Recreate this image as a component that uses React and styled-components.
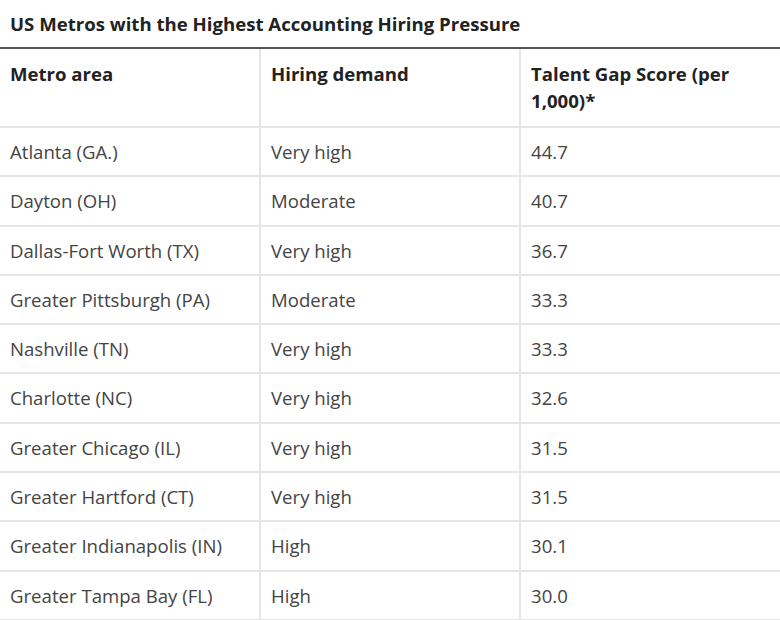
import React from "react";
import styled, { createGlobalStyle } from "styled-components";

const GlobalStyle = createGlobalStyle`
  html, body {
    margin: 0;
    padding: 0;
    background: #ffffff;
  }
  body {
    font-family: "Open Sans", Lato, "Liberation Sans", sans-serif;
    color: #444444;
  }
`;

const Wrapper = styled.div`
  width: 780px;
  overflow: hidden;
`;

const Title = styled.h3`
  margin: 0;
  padding: 11px 10px 10px;
  font-size: 18.6px;
  line-height: 26px;
  font-weight: 700;
  color: #222222;
  border-bottom: 2px solid #555555;
`;

const Table = styled.table`
  width: 780px;
  border-collapse: collapse;
  table-layout: fixed;
`;

const Head = styled.th`
  text-align: left;
  vertical-align: top;
  padding: 11px 10px 12px;
  font-size: 18.6px;
  line-height: 27px;
  font-weight: 700;
  color: #222222;
  border-bottom: 2px solid #e6e6e6;
  border-left: 2px solid #e6e6e6;
  &:first-child {
    border-left: none;
  }
`;

const Cell = styled.td`
  padding: 10px 10px 10.3px;
  font-size: 18.6px;
  line-height: 27px;
  color: #444444;
  border-bottom: 2px solid #e6e6e6;
  border-left: 2px solid #e6e6e6;
  &:first-child {
    border-left: none;
  }
`;

const rows = [
  ["Atlanta (GA.)", "Very high", "44.7"],
  ["Dayton (OH)", "Moderate", "40.7"],
  ["Dallas-Fort Worth (TX)", "Very high", "36.7"],
  ["Greater Pittsburgh (PA)", "Moderate", "33.3"],
  ["Nashville (TN)", "Very high", "33.3"],
  ["Charlotte (NC)", "Very high", "32.6"],
  ["Greater Chicago (IL)", "Very high", "31.5"],
  ["Greater Hartford (CT)", "Very high", "31.5"],
  ["Greater Indianapolis (IN)", "High", "30.1"],
  ["Greater Tampa Bay (FL)", "High", "30.0"],
];

const App = () => (
  <Wrapper>
    <GlobalStyle />
    <Title>US Metros with the Highest Accounting Hiring Pressure</Title>
    <Table>
      <colgroup>
        <col style={{ width: "260px" }} />
        <col style={{ width: "260px" }} />
        <col style={{ width: "260px" }} />
      </colgroup>
      <thead>
        <tr>
          <Head>Metro area</Head>
          <Head>Hiring demand</Head>
          <Head>Talent Gap Score (per 1,000)*</Head>
        </tr>
      </thead>
      <tbody>
        {rows.map((row) => (
          <tr key={row[0]}>
            {row.map((value, index) => (
              <Cell key={index}>{value}</Cell>
            ))}
          </tr>
        ))}
      </tbody>
    </Table>
  </Wrapper>
);

export default App;
